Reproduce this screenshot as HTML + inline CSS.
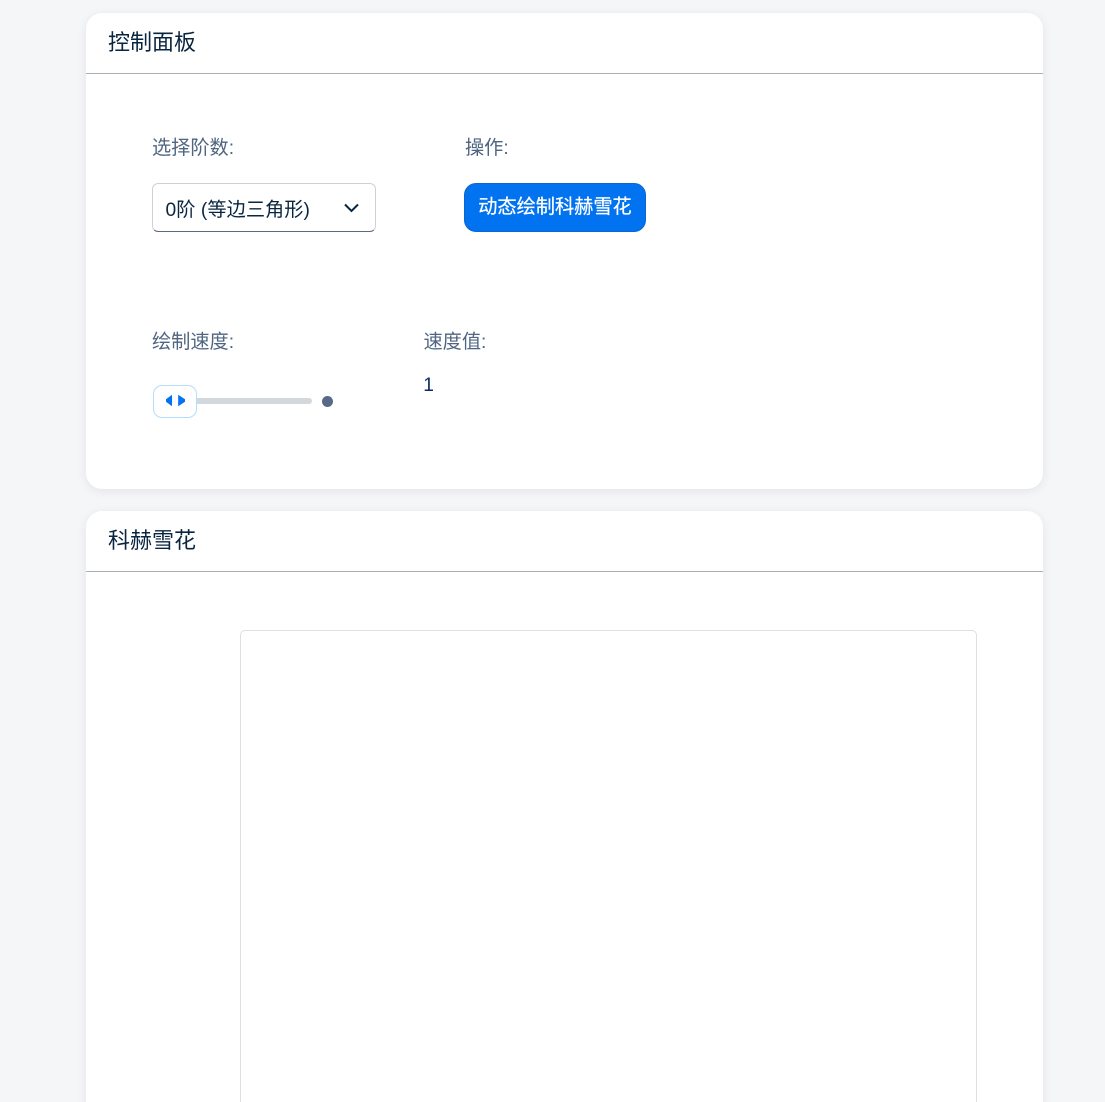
<!DOCTYPE html>
<html lang="zh-CN">
<head>
<meta charset="utf-8">
<title>科赫雪花</title>
<style>
*{box-sizing:border-box}
html,body{margin:0;padding:0;width:1105px;height:1102px;overflow:hidden;background:#f5f6f8}
#w{position:relative;width:1105px;height:1102px;overflow:hidden;background:#f5f6f8;font-family:"Liberation Sans","Noto Sans CJK SC",sans-serif}
.abs{position:absolute;white-space:nowrap}
.card{position:absolute;left:86px;width:957px;background:#fff;border-radius:16px;box-shadow:0 2px 10px rgba(0,0,0,.08)}
.hd{position:absolute;left:0;top:0;width:957px;height:61px;border-bottom:1px solid #a9b0b8}
.ttl{position:absolute;left:22px;top:15px;font-size:22px;line-height:30px;color:#0a2540;white-space:nowrap}
.lbl{font-size:19.2px;line-height:26px;color:#4f6580}
</style>
</head>
<body>
<div id="w">
<div class="card" style="top:13px;height:476px">
  <div class="hd"><div class="ttl">控制面板</div></div>
</div>
<div class="abs lbl" style="left:152px;top:136px">选择阶数:</div>
<div class="abs lbl" style="left:465px;top:136px">操作:</div>
<div class="abs" style="left:152px;top:183px;width:224px;height:49px;background:#fff;border:1px solid #cdd2d9;border-bottom-color:#5a6a80;border-radius:6px"></div>
<div class="abs" style="left:165.500px;top:197px;font-size:19.2px;line-height:28px;letter-spacing:.06px;color:#0a2540">0阶 (等边三角形)</div>
<svg class="abs" style="left:343px;top:202px" width="17" height="12" viewBox="0 0 17 12"><path d="M2 2.500 8.500 9 15 2.500" fill="none" stroke="#0a2540" stroke-width="2"/></svg>
<div class="abs" style="left:464px;top:183px;width:182px;height:49px;background:#0172f0;border:1px solid #0b66d0;border-radius:12px;text-align:center;color:#fff;font-size:19.2px;line-height:47px;-webkit-text-stroke:.25px #fff">动态绘制科赫雪花</div>

<div class="abs lbl" style="left:152px;top:330px">绘制速度:</div>
<div class="abs lbl" style="left:423.500px;top:330px">速度值:</div>
<div class="abs" style="left:197px;top:398px;width:115px;height:6px;background:#d3d8dd;border-radius:0 3px 3px 0"></div>
<div class="abs" style="left:322px;top:396px;width:11px;height:11px;background:#566a85;border-radius:50%"></div>
<div class="abs" style="left:153px;top:385px;width:44px;height:33px;background:#fff;border:1px solid #b5dcfb;border-radius:9px"></div>
<svg class="abs" style="left:165px;top:394px" width="21" height="13" viewBox="0 0 21 13"><path d="M7 .8V12.200L1 7.800V5.200Z" fill="#0172f0"/><path d="M13.200 .8V12.200L20 7.800V5.200Z" fill="#0172f0"/></svg>
<div class="abs" style="left:423.300px;top:373px;font-size:19.2px;line-height:26px;color:#0a2a6a">1</div>

<div class="card" style="top:511px;height:620px">
  <div class="hd"><div class="ttl">科赫雪花</div></div>
</div>
<div class="abs" style="left:240px;top:630px;width:737px;height:520px;background:#fff;border:1px solid #dcdfe3;border-radius:5px"></div>
</div>
</body>
</html>
